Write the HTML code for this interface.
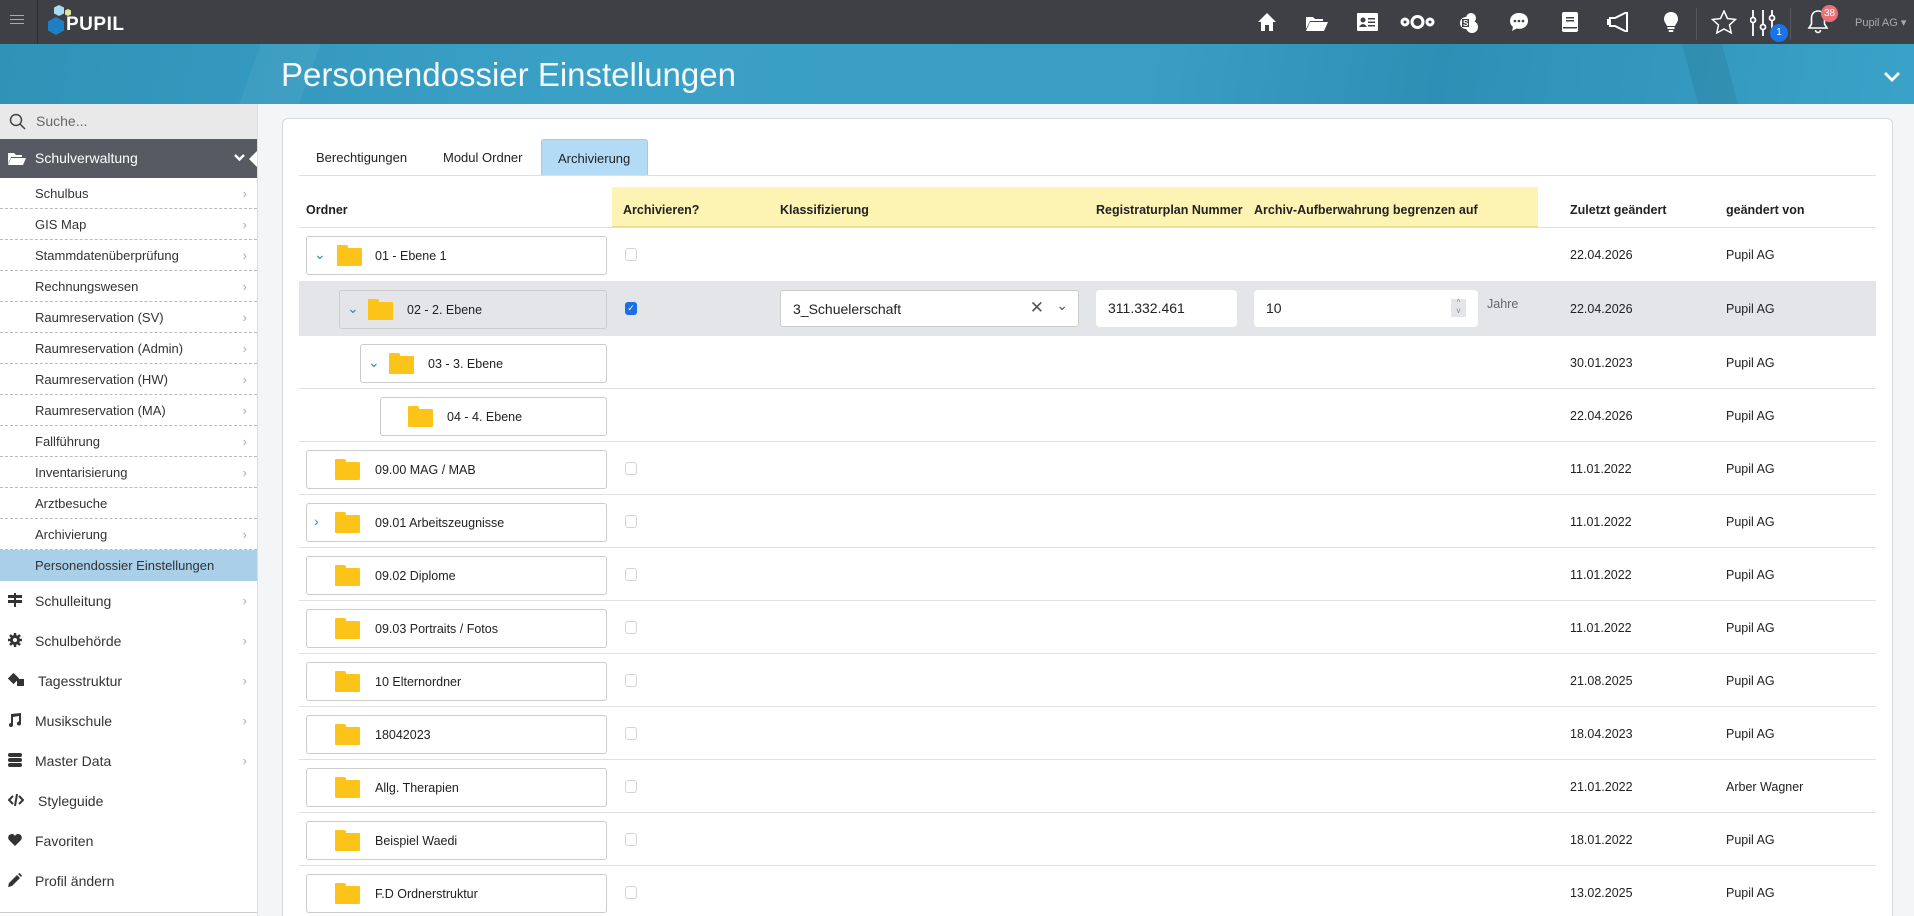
<!DOCTYPE html>
<html style="width:1914px;height:916px;overflow:hidden"><head><meta charset="utf-8"><style>
*{box-sizing:border-box;margin:0;padding:0}
body{width:1914px;height:916px;overflow:hidden;font-family:"Liberation Sans",sans-serif;font-size:13px;color:#222;background:#f4f5f7;position:relative;white-space:nowrap}
.top{position:absolute;left:0;top:0;width:1914px;height:44px;background:#3f4045}
.banner{position:absolute;left:0;top:44px;width:1914px;height:60px;background:linear-gradient(100deg,#2f93b8 0%,#3ba0c6 30%,#3a9dc4 60%,#2e8fb5 75%,#3aa2c8 100%);overflow:hidden}
.banner h1{position:absolute;left:281px;top:12px;font-weight:normal;font-size:33px;color:#f4f9fc;font-family:"Liberation Sans",sans-serif}
.side{position:absolute;left:0;top:104px;width:258px;height:812px;background:#fff;border-right:1px solid #ddd;overflow:hidden}
.search{height:35px;background:#e9e9ea;color:#666;font-size:14px;padding:9px 0 0 36px;position:relative}
.sv{height:39px;background:#575a63;color:#fff;font-size:14px;padding:11px 0 0 35px;position:relative}
.sub{height:31px;border-bottom:1px dashed #bbb;padding:8px 0 0 35px;font-size:13px;color:#333;position:relative}
.sub.act{background:#a9cfe9;border-bottom:none}
.chev{position:absolute;right:10px;top:8px;color:#aaa;font-size:13px}
.main{height:40px;padding:12px 0 0 35px;font-size:14px;color:#333;position:relative}
.main .ic{position:absolute;left:8px;top:12px;width:14px;height:14px}
.card{position:absolute;left:282px;top:118px;width:1611px;height:798px;background:#fff;border:1px solid #d8dadd;border-bottom:none;border-radius:6px 6px 0 0}
.tab{position:absolute;top:139px;height:36px;font-size:13px;padding-top:11px;color:#222}
.row{position:absolute;left:299px;width:1577px;border-bottom:1px solid #dfe1e4}
.fb{position:absolute;height:39px;border:1px solid #ccc;border-radius:3px;background:#fff;font-size:12.5px}
.fb .fo{position:absolute;top:11px;width:25px;height:18px;background:#fcc419;border-radius:1px}
.fb .fo:before{content:"";position:absolute;left:0;top:-3px;width:11px;height:4px;background:#fcc419;border-radius:1px 2px 0 0}
.fb .t{position:absolute;top:12px}
.fb .ar{position:absolute;left:7px;top:9px;color:#2a8bb8;font-size:14px}
.cb{position:absolute;left:625px;width:12px;height:13px;border:1px solid #d4d4d4;border-radius:3px;background:#fff}
.d{position:absolute;left:1570px;font-size:12.5px}
.u{position:absolute;left:1726px;font-size:12.5px}
.th{position:absolute;top:203px;font-weight:bold;font-size:12.5px}
.icon{position:absolute;top:12px;fill:#fff}
</style></head><body>
<div class="top">
 <div style="position:absolute;left:10px;top:15px;width:14px;height:1px;background:#aaa;box-shadow:0 4px 0 #aaa,0 8px 0 #aaa"></div>
 <div style="position:absolute;left:37px;top:0;width:1px;height:44px;background:#2c2d31"></div>
 <svg style="position:absolute;left:46px;top:3px" width="26" height="34"><polygon points="10,14 18,18.5 18,27.5 10,32 2,27.5 2,18.5" fill="#1f7fc4"/><polygon points="13,2 18,4.5 18,10.5 13,13 8,10.5 8,4.5" fill="#a7dcf2"/><polygon points="22,6 25,7.5 25,11.5 22,13 19,11.5 19,7.5" fill="#d9e99a"/></svg>
 <div style="position:absolute;left:66px;top:14px;color:#fff;font-weight:bold;font-size:19px;letter-spacing:.5px">PUPIL</div>
 <svg class="icon" style="left:1257px" width="20" height="20" viewBox="0 0 20 20"><path d="M10 1L1 10h3v9h4v-6h4v6h4v-9h3z"/></svg>
 <svg class="icon" style="left:1306px;top:15px" width="22" height="16" viewBox="0 0 22 16"><path d="M0 2h7l2 2h8v2H4L0 14zM4 7h18l-4 9H0z"/></svg>
 <svg class="icon" style="left:1357px;top:13px" width="21" height="18" viewBox="0 0 21 18"><rect width="21" height="18" rx="1"/><circle cx="6" cy="7" r="2.5" fill="#3f4045"/><path d="M2 14q4-6 8 0z" fill="#3f4045"/><rect x="11" y="5" width="7" height="1.5" fill="#3f4045"/><rect x="11" y="8.5" width="7" height="1.5" fill="#3f4045"/><rect x="11" y="12" width="7" height="1.5" fill="#3f4045"/></svg>
 <svg class="icon" style="left:1400px;top:14px" width="35" height="16" viewBox="0 0 35 16"><g fill="none" stroke="#fff" stroke-width="3"><circle cx="5" cy="8" r="3"/><circle cx="17.5" cy="8" r="5.5"/><circle cx="30" cy="8" r="3"/></g></svg>
 <svg class="icon" style="left:1460px;top:13px" width="18" height="20" viewBox="0 0 18 20"><circle cx="11" cy="5" r="5"/><circle cx="12" cy="14" r="6"/><circle cx="6" cy="10" r="6"/><rect x="2" y="6" width="7" height="8" fill="#3f4045"/><text x="3" y="13" font-size="8" fill="#fff" font-weight="bold">S</text></svg>
 <svg class="icon" style="left:1509px" width="20" height="20" viewBox="0 0 20 20"><path d="M10 1C4.5 1 1 4.5 1 9c0 2.5 1.2 4.5 3 6l-1 4 4.5-2.5c.8.2 1.6.3 2.5.3 5.5 0 9-3.5 9-8S15.5 1 10 1z"/><circle cx="6" cy="9" r="1.3" fill="#3f4045"/><circle cx="10" cy="9" r="1.3" fill="#3f4045"/><circle cx="14" cy="9" r="1.3" fill="#3f4045"/></svg>
 <svg class="icon" style="left:1562px" width="16" height="20" viewBox="0 0 16 20"><rect width="16" height="20" rx="2"/><rect x="4" y="5" width="8" height="1.5" fill="#3f4045"/><rect x="4" y="8" width="8" height="1.5" fill="#3f4045"/><rect x="1" y="15" width="14" height="1.5" fill="#3f4045"/></svg>
 <svg class="icon" style="left:1607px" width="24" height="20" viewBox="0 0 24 20"><path d="M3 6h5l12-6v20L8 14H3z" fill="none" stroke="#fff" stroke-width="2"/><rect x="0" y="7" width="2" height="6"/></svg>
 <svg class="icon" style="left:1664px" width="14" height="21" viewBox="0 0 14 21"><path d="M7 0C3 0 0 3 0 7c0 3 2 4.5 3 7h8c1-2.5 3-4 3-7 0-4-3-7-7-7z"/><rect x="3.5" y="15" width="7" height="2"/><rect x="4.5" y="18" width="5" height="2" rx="1"/></svg>
 <div style="position:absolute;left:1696px;top:8px;width:1px;height:32px;background:#57585d"></div>
 <svg class="icon" style="left:1711px;top:10px" width="26" height="24" viewBox="0 0 26 24"><path d="M13 1l3.5 7.5 8 .9-6 5.5 1.7 8L13 19l-7.2 4 1.7-8-6-5.5 8-.9z" fill="none" stroke="#fff" stroke-width="1.5"/></svg>
 <svg class="icon" style="left:1750px;top:10px" width="26" height="26" viewBox="0 0 26 26" fill="none" stroke="#fff" stroke-width="1.8"><path d="M3 0v26M13 0v26M22 0v26"/><circle cx="3" cy="10" r="2.5" fill="#3f4045"/><circle cx="13" cy="17" r="2.5" fill="#3f4045"/><circle cx="22" cy="8" r="2.5" fill="#3f4045"/></svg>
 <div style="position:absolute;left:1770px;top:24px;width:18px;height:18px;border-radius:50%;background:#1a73e8;color:#fff;font-size:10px;text-align:center;line-height:18px">1</div>
 <div style="position:absolute;left:1790px;top:8px;width:1px;height:32px;background:#57585d"></div>
 <svg class="icon" style="left:1807px;top:9px" width="22" height="25" viewBox="0 0 22 25"><path d="M11 2c-4 0-6.5 3-6.5 7v6L2 19h18l-2.5-4V9c0-4-2.5-7-6.5-7zM8.5 21a2.5 2.5 0 005 0" fill="none" stroke="#fff" stroke-width="1.6"/></svg>
 <div style="position:absolute;left:1821px;top:5px;width:17px;height:17px;border-radius:50%;background:#f06f77;color:#fff;font-size:10px;text-align:center;line-height:17px">38</div>
 <div style="position:absolute;left:1855px;top:16px;color:#aaa;font-size:11px">Pupil AG ▾</div>
</div>
<div class="banner">
 <div style="position:absolute;left:250px;top:0;width:60px;height:60px;background:rgba(255,255,255,.05);transform:skewX(-20deg)"></div>
 <div style="position:absolute;left:1690px;top:0;width:40px;height:60px;background:rgba(0,0,0,.07);transform:skewX(15deg)"></div>
 <h1>Personendossier Einstellungen</h1>
 <svg style="position:absolute;left:1884px;top:28px" width="16" height="10" viewBox="0 0 16 10"><path d="M1 1l7 7 7-7" fill="none" stroke="#fff" stroke-width="2.8"/></svg>
</div>
<div class="side">
 <div class="search"><svg style="position:absolute;left:9px;top:9px" width="17" height="17" viewBox="0 0 17 17"><circle cx="7" cy="7" r="5.5" fill="none" stroke="#444" stroke-width="1.5"/><path d="M11 11l5 5" stroke="#444" stroke-width="1.5"/></svg>Suche...</div>
 <div class="sv"><svg style="position:absolute;left:8px;top:13px" width="18" height="13" viewBox="0 0 18 13"><path d="M0 1h6l2 2h6v2H3L0 12zM3 6h15l-3 7H0z" fill="#fff"/></svg>Schulverwaltung<svg style="position:absolute;right:12px;top:15px" width="11" height="8" viewBox="0 0 11 8"><path d="M1 1l4.5 4.5L10 1" fill="none" stroke="#fff" stroke-width="2.4"/></svg><div style="position:absolute;right:0;top:12px;border:8px solid transparent;border-right-color:#fff"></div></div>
 <div class="sub">Schulbus<span class="chev">›</span></div>
 <div class="sub">GIS Map<span class="chev">›</span></div>
 <div class="sub">Stammdatenüberprüfung<span class="chev">›</span></div>
 <div class="sub">Rechnungswesen<span class="chev">›</span></div>
 <div class="sub">Raumreservation (SV)<span class="chev">›</span></div>
 <div class="sub">Raumreservation (Admin)<span class="chev">›</span></div>
 <div class="sub">Raumreservation (HW)<span class="chev">›</span></div>
 <div class="sub">Raumreservation (MA)<span class="chev">›</span></div>
 <div class="sub">Fallführung<span class="chev">›</span></div>
 <div class="sub">Inventarisierung<span class="chev">›</span></div>
 <div class="sub">Arztbesuche</div>
 <div class="sub">Archivierung<span class="chev">›</span></div>
 <div class="sub act">Personendossier Einstellungen</div>
 <div class="main"><svg class="ic" viewBox="0 0 14 14"><rect x="0" y="2" width="14" height="3" fill="#333"/><rect x="0" y="7" width="14" height="3" fill="#333"/><rect x="6" y="0" width="2" height="14" fill="#333"/></svg>Schulleitung<span class="chev" style="top:12px">›</span></div>
 <div class="main"><svg class="ic" viewBox="0 0 14 14"><circle cx="7" cy="7" r="5" fill="#333"/><path d="M7 0v14M0 7h14M2 2l10 10M12 2L2 12" stroke="#333" stroke-width="2.5"/><circle cx="7" cy="7" r="2" fill="#fff"/></svg>Schulbehörde<span class="chev" style="top:12px">›</span></div>
 <div class="main" style="padding-left:38px"><svg class="ic" viewBox="0 0 16 14" style="width:16px"><rect x="1.5" y="1.5" width="8" height="8" transform="rotate(45 5.5 5.5)" fill="#333"/><rect x="9" y="6" width="7" height="7" fill="#333"/></svg>Tagesstruktur<span class="chev" style="top:12px">›</span></div>
 <div class="main"><svg class="ic" viewBox="0 0 14 14"><path d="M3 1l10-1v10h-2V3L5 4v8H3z" fill="#333"/><circle cx="3" cy="12" r="2" fill="#333"/><circle cx="11" cy="10.5" r="2" fill="#333"/></svg>Musikschule<span class="chev" style="top:12px">›</span></div>
 <div class="main"><svg class="ic" viewBox="0 0 14 14"><rect y="0" width="14" height="4" rx="2" fill="#333"/><rect y="5" width="14" height="4" rx="2" fill="#333"/><rect y="10" width="14" height="4" rx="2" fill="#333"/></svg>Master Data<span class="chev" style="top:12px">›</span></div>
 <div class="main" style="padding-left:38px"><svg class="ic" viewBox="0 0 16 14" style="width:16px"><path d="M5 3L1 7l4 4M11 3l4 4-4 4M9 1L7 13" fill="none" stroke="#333" stroke-width="2"/></svg>Styleguide</div>
 <div class="main"><svg class="ic" viewBox="0 0 14 14"><path d="M7 13L1 7C-1 4 1 1 4 1c1.5 0 2.5 1 3 2 .5-1 1.5-2 3-2 3 0 5 3 3 6z" fill="#333"/></svg>Favoriten</div>
 <div class="main"><svg class="ic" viewBox="0 0 14 14"><path d="M0 14l1-4 8-8 3 3-8 8zM10 1l1.5-1 2.5 2.5-1 1.5z" fill="#333"/></svg>Profil ändern</div>
 <div style="border-top:1px solid #ccc;margin-top:11px"></div>
</div>
<div class="card"></div>
<div class="tab" style="left:316px">Berechtigungen</div>
<div class="tab" style="left:443px">Modul Ordner</div>
<div class="tab" style="left:541px;width:107px;background:#b3dbf6;border:1px solid #9ecbec;border-bottom:none;border-radius:3px 3px 0 0;padding-left:16px">Archivierung</div>
<div style="position:absolute;left:299px;top:175px;width:1577px;height:1px;background:#dde0e3"></div>
<div style="position:absolute;left:612px;top:187px;width:926px;height:40px;background:#fdf3b3;border-bottom:1px solid #e8d98a"></div>
<div style="position:absolute;left:299px;top:227px;width:1577px;height:1px;background:#dfe1e4"></div>
<div class="th" style="left:306px">Ordner</div>
<div class="th" style="left:623px">Archivieren?</div>
<div class="th" style="left:780px">Klassifizierung</div>
<div class="th" style="left:1096px">Registraturplan Nummer</div>
<div class="th" style="left:1254px">Archiv-Aufberwahrung begrenzen auf</div>
<div class="th" style="left:1570px">Zuletzt geändert</div>
<div class="th" style="left:1726px">geändert von</div>

<div class="fb" style="left:306px;top:236px;width:301px"><span class="ar">⌄</span><span class="fo" style="left:30px"></span><span class="t" style="left:68px">01 - Ebene 1</span></div>
<div class="cb" style="top:248px"></div><div class="d" style="top:248px">22.04.2026</div><div class="u" style="top:248px">Pupil AG</div>
<div style="position:absolute;left:299px;top:281px;width:1577px;height:55px;background:#e4e5e8"></div>
<div class="fb" style="left:339px;top:290px;width:268px;background:#e4e5e8"><span class="ar">⌄</span><span class="fo" style="left:28px"></span><span class="t" style="left:67px">02 - 2. Ebene</span></div>
<div style="position:absolute;left:625px;top:302px;width:12px;height:13px;background:#1a6ee6;border-radius:3px;color:#fff;font-size:9px;text-align:center;line-height:13px">✓</div>
<div style="position:absolute;left:780px;top:290px;width:299px;height:37px;background:#fff;border:1px solid #ccc;border-radius:3px;font-size:14px;padding:10px 12px">3_Schuelerschaft<span style="position:absolute;right:34px;top:7px;font-size:17px;color:#555">✕</span><span style="position:absolute;right:10px;top:6px;color:#555">⌄</span></div>
<div style="position:absolute;left:1096px;top:290px;width:141px;height:37px;background:#fff;border-radius:4px;font-size:14px;padding:10px 12px">311.332.461</div>
<div style="position:absolute;left:1254px;top:290px;width:224px;height:37px;background:#fff;border-radius:4px;font-size:14px;padding:10px 12px">10<span style="position:absolute;right:12px;top:9px;width:15px;height:18px;background:#e4e5e8;font-size:8px;color:#888;text-align:center;line-height:8px">^<br>v</span></div>
<div style="position:absolute;left:1487px;top:297px;color:#666;font-size:12.5px">Jahre</div>
<div class="d" style="top:302px">22.04.2026</div><div class="u" style="top:302px">Pupil AG</div>
<div class="fb" style="left:360px;top:344px;width:247px"><span class="ar">⌄</span><span class="fo" style="left:28px"></span><span class="t" style="left:67px">03 - 3. Ebene</span></div>
<div class="d" style="top:356px">30.01.2023</div><div class="u" style="top:356px">Pupil AG</div>
<div style="position:absolute;left:299px;top:388px;width:1577px;height:1px;background:#dfe1e4"></div>
<div class="fb" style="left:380px;top:397px;width:227px"><span class="fo" style="left:27px"></span><span class="t" style="left:66px">04 - 4. Ebene</span></div>
<div class="d" style="top:409px">22.04.2026</div><div class="u" style="top:409px">Pupil AG</div>
<div style="position:absolute;left:299px;top:441px;width:1577px;height:1px;background:#dfe1e4"></div>

<div class="fb" style="left:306px;top:450px;width:301px"><span class="fo" style="left:28px"></span><span class="t" style="left:68px">09.00 MAG / MAB</span></div><div class="cb" style="top:462px"></div><div class="d" style="top:462px">11.01.2022</div><div class="u" style="top:462px">Pupil AG</div><div class="row" style="top:494px"></div>
<div class="fb" style="left:306px;top:503px;width:301px"><span class="ar">›</span><span class="fo" style="left:28px"></span><span class="t" style="left:68px">09.01 Arbeitszeugnisse</span></div><div class="cb" style="top:515px"></div><div class="d" style="top:515px">11.01.2022</div><div class="u" style="top:515px">Pupil AG</div><div class="row" style="top:547px"></div>
<div class="fb" style="left:306px;top:556px;width:301px"><span class="fo" style="left:28px"></span><span class="t" style="left:68px">09.02 Diplome</span></div><div class="cb" style="top:568px"></div><div class="d" style="top:568px">11.01.2022</div><div class="u" style="top:568px">Pupil AG</div><div class="row" style="top:600px"></div>
<div class="fb" style="left:306px;top:609px;width:301px"><span class="fo" style="left:28px"></span><span class="t" style="left:68px">09.03 Portraits / Fotos</span></div><div class="cb" style="top:621px"></div><div class="d" style="top:621px">11.01.2022</div><div class="u" style="top:621px">Pupil AG</div><div class="row" style="top:653px"></div>
<div class="fb" style="left:306px;top:662px;width:301px"><span class="fo" style="left:28px"></span><span class="t" style="left:68px">10 Elternordner</span></div><div class="cb" style="top:674px"></div><div class="d" style="top:674px">21.08.2025</div><div class="u" style="top:674px">Pupil AG</div><div class="row" style="top:706px"></div>
<div class="fb" style="left:306px;top:715px;width:301px"><span class="fo" style="left:28px"></span><span class="t" style="left:68px">18042023</span></div><div class="cb" style="top:727px"></div><div class="d" style="top:727px">18.04.2023</div><div class="u" style="top:727px">Pupil AG</div><div class="row" style="top:759px"></div>
<div class="fb" style="left:306px;top:768px;width:301px"><span class="fo" style="left:28px"></span><span class="t" style="left:68px">Allg. Therapien</span></div><div class="cb" style="top:780px"></div><div class="d" style="top:780px">21.01.2022</div><div class="u" style="top:780px">Arber Wagner</div><div class="row" style="top:812px"></div>
<div class="fb" style="left:306px;top:821px;width:301px"><span class="fo" style="left:28px"></span><span class="t" style="left:68px">Beispiel Waedi</span></div><div class="cb" style="top:833px"></div><div class="d" style="top:833px">18.01.2022</div><div class="u" style="top:833px">Pupil AG</div><div class="row" style="top:865px"></div>
<div class="fb" style="left:306px;top:874px;width:301px"><span class="fo" style="left:28px"></span><span class="t" style="left:68px">F.D Ordnerstruktur</span></div><div class="cb" style="top:886px"></div><div class="d" style="top:886px">13.02.2025</div><div class="u" style="top:886px">Pupil AG</div>
</body></html>
